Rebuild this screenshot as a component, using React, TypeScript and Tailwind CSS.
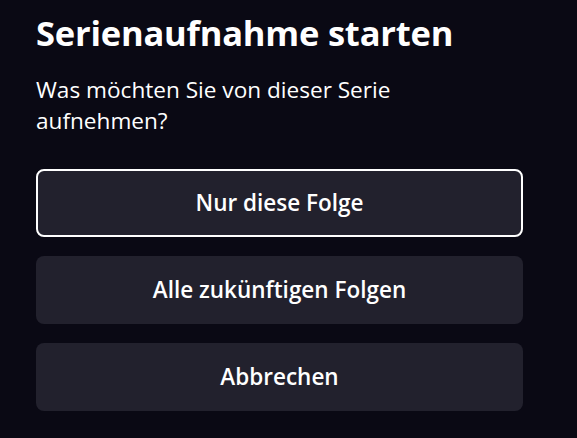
const options = ['Nur diese Folge', 'Alle zukünftigen Folgen', 'Abbrechen']

export default function App() {
    return (
        <div
            className="w-[577px] h-[438px] bg-[#0a0914] text-white overflow-hidden"
            style={{ fontFamily: '"Open Sans", "Noto Sans", sans-serif' }}
        >
            <div className="pl-[36px] pr-[54px] pt-[11px]">
                <h2 className="text-[34.5px] font-bold leading-[44px] tracking-[-0.2px]">
                    Serienaufnahme starten
                </h2>
                <p className="mt-[19px] text-[22.6px] leading-[31px] w-[420px]">
                    Was möchten Sie von dieser Serie aufnehmen?
                </p>
                <div className="mt-[33px] flex flex-col gap-[19px]">
                    {options.map((label, i) => (
                        <button
                            key={label}
                            className={cn(
                                "h-[68px] w-full rounded-[8px] bg-[#22212d] text-[22.5px] font-semibold",
                                i === 0 ? "border-2 border-white" : "border-2 border-transparent"
                            )}
                        >
                            {label}
                        </button>
                    ))}
                </div>
            </div>
        </div>
    )
}

function cn(...classes: (string | boolean | undefined)[]) {
    return classes.filter(Boolean).join(' ')
}
